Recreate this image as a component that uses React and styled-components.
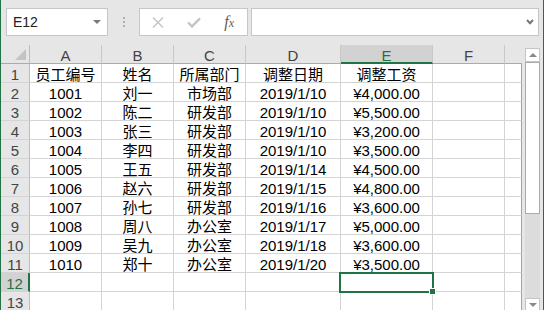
import styled, { createGlobalStyle } from "styled-components";

const GREEN = "#217346";
const GRID = "#d4d4d4";

const GlobalStyle = createGlobalStyle`
  body {
    margin: 0;
    background: #fff;
  }
`;

const columns = [
  { key: "A", width: 72 },
  { key: "B", width: 72 },
  { key: "C", width: 72 },
  { key: "D", width: 95 },
  { key: "E", width: 92 },
  { key: "F", width: 72 },
  { key: "", width: 17 },
];

const rows = [
  ["员工编号", "姓名", "所属部门", "调整日期", "调整工资"],
  ["1001", "刘一", "市场部", "2019/1/10", "¥4,000.00"],
  ["1002", "陈二", "研发部", "2019/1/10", "¥5,500.00"],
  ["1003", "张三", "研发部", "2019/1/10", "¥3,200.00"],
  ["1004", "李四", "研发部", "2019/1/10", "¥3,500.00"],
  ["1005", "王五", "研发部", "2019/1/14", "¥4,500.00"],
  ["1006", "赵六", "研发部", "2019/1/15", "¥4,800.00"],
  ["1007", "孙七", "研发部", "2019/1/16", "¥3,600.00"],
  ["1008", "周八", "办公室", "2019/1/17", "¥5,000.00"],
  ["1009", "吴九", "办公室", "2019/1/18", "¥3,600.00"],
  ["1010", "郑十", "办公室", "2019/1/20", "¥3,500.00"],
  [],
  [],
];

const App = () => {
  return (
    <>
      <GlobalStyle />
      <Window>
        <Toolbar>
          <NameBox>
            <span>E12</span>
            <DropTri />
          </NameBox>
          <Grip>
            <Dot />
            <Dot />
            <Dot />
          </Grip>
          <FuncBox>
            <FuncBtn>
              <svg width="12" height="11" viewBox="0 0 12 11">
                <path d="M1 0.5 L11 10.5 M11 0.5 L1 10.5" stroke="#c4c4c4" strokeWidth="1.4" fill="none" />
              </svg>
            </FuncBtn>
            <FuncBtn>
              <svg width="14" height="11" viewBox="0 0 14 11">
                <path d="M1 5.5 L5 9.4 L13 1.4" stroke="#c4c4c4" strokeWidth="2.4" fill="none" />
              </svg>
            </FuncBtn>
            <FuncBtn>
              <Fx>
                f<small>x</small>
              </Fx>
            </FuncBtn>
          </FuncBox>
          <FormulaBar>
            <svg width="8" height="6" viewBox="0 0 8 6">
              <path d="M1 1 L4 4.2 L7 1" stroke="#767676" strokeWidth="2" fill="none" />
            </svg>
          </FormulaBar>
        </Toolbar>

        <Sheet>
          <Grid>
            <Corner />
            {columns.map((c, i) => (
              <ColHead key={i} $active={c.key === "E"} $last={i === columns.length - 1}>
                {c.key}
              </ColHead>
            ))}
            {rows.map((r, ri) => (
              <Row key={ri} num={ri + 1} data={r} />
            ))}
          </Grid>
          <ScrollBar>
            <ScrollBtn>
              <Tri $up />
            </ScrollBtn>
            <Thumb />
            <Track />
            <ScrollBtn>
              <Tri />
            </ScrollBtn>
          </ScrollBar>
        </Sheet>
      </Window>
    </>
  );
};

const Row = ({ num, data }) => {
  const active = num === 12;
  return (
    <>
      <RowHead $active={active}>{num}</RowHead>
      {columns.map((c, i) => (
        <Cell key={i} $last={i === columns.length - 1}>
          {data[i] || ""}
          {active && c.key === "E" && (
            <Selection>
              <Handle />
            </Selection>
          )}
        </Cell>
      ))}
    </>
  );
};

export default App;

const Window = styled.div`
  width: 544px;
  height: 310px;
  box-sizing: border-box;
  border-left: 1px solid ${GREEN};
  border-right: 1px solid ${GREEN};
  background: #e6e6e6;
  overflow: hidden;
  font-family: "Liberation Sans", "Noto Sans CJK SC", sans-serif;
`;

const Toolbar = styled.div`
  display: flex;
  align-items: flex-start;
  height: 45px;
  box-sizing: border-box;
  padding: 8px 0 0 5px;
`;

const NameBox = styled.div`
  width: 102px;
  height: 28px;
  box-sizing: border-box;
  border: 1px solid #c6c6c6;
  background: #fff;
  display: flex;
  align-items: center;
  justify-content: space-between;
  padding: 0 6px;
  font-size: 14px;
  color: #222;
`;

const DropTri = styled.div`
  width: 0;
  height: 0;
  border-left: 4px solid transparent;
  border-right: 4px solid transparent;
  border-top: 4px solid #7a7a7a;
`;

const Grip = styled.div`
  width: 31px;
  height: 28px;
  display: flex;
  flex-direction: column;
  align-items: center;
  justify-content: center;
  gap: 2px;
`;

const Dot = styled.div`
  width: 2px;
  height: 2px;
  background: #b0b0b0;
`;

const FuncBox = styled.div`
  width: 109px;
  height: 28px;
  box-sizing: border-box;
  border: 1px solid #c6c6c6;
  background: #fff;
  display: flex;
`;

const FuncBtn = styled.div`
  flex: 1;
  display: flex;
  align-items: center;
  justify-content: center;
`;

const Fx = styled.span`
  font-family: "Liberation Serif", serif;
  font-style: italic;
  font-size: 16px;
  color: #5e5e5e;
  small {
    font-size: 12px;
  }
`;

const FormulaBar = styled.div`
  margin-left: 3px;
  width: 288px;
  height: 28px;
  box-sizing: border-box;
  border: 1px solid #c6c6c6;
  background: #fff;
  display: flex;
  align-items: center;
  justify-content: flex-end;
  padding-right: 4px;
`;

const Sheet = styled.div`
  display: flex;
  height: 265px;
`;

const Grid = styled.div`
  display: grid;
  grid-template-columns: 29px ${columns.map((c) => c.width + "px").join(" ")};
  grid-auto-rows: 19px;
  align-content: start;
  font-size: 15px;
`;

const Base = styled.div`
  box-sizing: border-box;
  text-align: center;
  white-space: nowrap;
  padding-top: 3px;
  line-height: 16px;
  position: relative;
`;

const Corner = styled(Base)`
  background: #e6e6e6;
  border-right: 1px solid #bdbdbd;
  border-bottom: 1px solid #ababab;
  &::after {
    content: "";
    position: absolute;
    right: 3px;
    bottom: 3px;
    width: 0;
    height: 0;
    border-left: 11px solid transparent;
    border-bottom: 11px solid #c3c3c3;
  }
`;

const ColHead = styled(Base)`
  background: ${(p) => (p.$active ? "#d2d2d2" : "#e6e6e6")};
  color: ${(p) => (p.$active ? GREEN : "#444")};
  border-right: ${(p) => (p.$last ? "none" : "1px solid #c8c8c8")};
  border-bottom: ${(p) => (p.$active ? `2px solid ${GREEN}` : "1px solid #ababab")};
`;

const RowHead = styled(Base)`
  background: ${(p) => (p.$active ? "#d2d2d2" : "#e6e6e6")};
  color: ${(p) => (p.$active ? GREEN : "#444")};
  border-right: ${(p) => (p.$active ? `2px solid ${GREEN}` : "1px solid #bdbdbd")};
  border-bottom: 1px solid ${GRID};
`;

const Cell = styled(Base)`
  background: #fff;
  color: #000;
  border-right: 1px solid ${(p) => (p.$last ? "#a3a3a3" : GRID)};
  border-bottom: 1px solid ${GRID};
`;

const Selection = styled.div`
  position: absolute;
  left: -2px;
  top: -1px;
  right: -2px;
  bottom: -2px;
  border: 2px solid ${GREEN};
  z-index: 2;
`;

const Handle = styled.div`
  position: absolute;
  right: -4px;
  bottom: -4px;
  width: 5px;
  height: 5px;
  background: ${GREEN};
  border: 1px solid #fff;
`;

const ScrollBar = styled.div`
  width: 21px;
  box-sizing: border-box;
  padding: 3px 3px 0;
  display: flex;
  flex-direction: column;
  background: #e6e6e6;
`;

const ScrollBtn = styled.div`
  height: 14px;
  flex-shrink: 0;
  box-sizing: border-box;
  border: 1px solid #c6c6c6;
  background: #fff;
  display: flex;
  align-items: center;
  justify-content: center;
`;

const Tri = styled.div`
  width: 0;
  height: 0;
  border-left: 4px solid transparent;
  border-right: 4px solid transparent;
  ${(p) => (p.$up ? "border-bottom: 4px solid #8a8a8a;" : "border-top: 4px solid #8a8a8a;")}
`;

const Thumb = styled.div`
  height: 152px;
  flex-shrink: 0;
  box-sizing: border-box;
  background: #fff;
  border: 1px solid #ababab;
`;

const Track = styled.div`
  height: 84px;
  flex-shrink: 0;
  background: #dcdcdc;
`;
